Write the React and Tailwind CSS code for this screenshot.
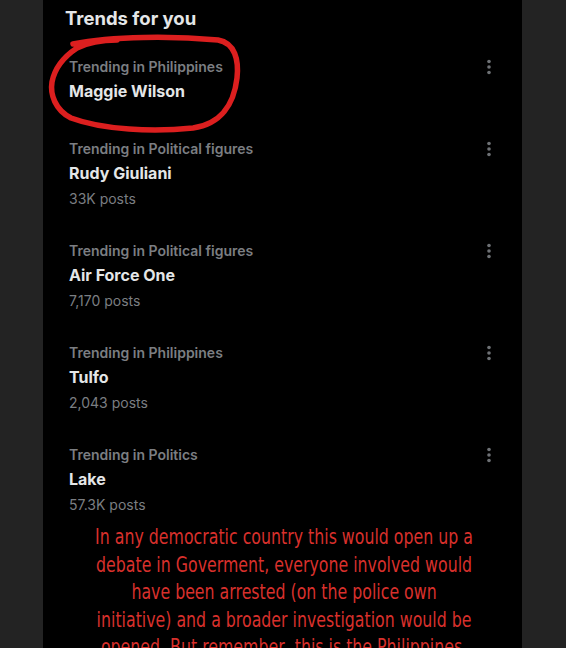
const trends = [
  { label: 'Trending in Philippines', name: 'Maggie Wilson', posts: null },
  { label: 'Trending in Political figures', name: 'Rudy Giuliani', posts: '33K posts' },
  { label: 'Trending in Political figures', name: 'Air Force One', posts: '7,170 posts' },
  { label: 'Trending in Philippines', name: 'Tulfo', posts: '2,043 posts' },
  { label: 'Trending in Politics', name: 'Lake', posts: '57.3K posts' },
];

const note = [
  'In any democratic country this would open up a',
  'debate in Goverment, everyone involved would',
  'have been arrested (on the police own',
  'initiative) and a broader investigation would be',
  'opened. But remember, this is the Philippines.',
];

function Dots() {
  return (
    <svg width="6" height="16" viewBox="0 0 6 16" className="text-[#6e7175]">
      <circle cx="3" cy="2.5" r="1.8" fill="currentColor" />
      <circle cx="3" cy="8" r="1.8" fill="currentColor" />
      <circle cx="3" cy="13.5" r="1.8" fill="currentColor" />
    </svg>
  );
}

function TrendRow({ item, first }) {
  return (
    <div className={`flex justify-between pl-[26px] pr-[30px] ${first ? 'pb-[32px]' : 'pb-[27px]'}`}>
      <div className="flex flex-col">
        <span className="h-[25px] leading-[25px] text-[14px] font-semibold text-[#7b7e82]">{item.label}</span>
        <span className="h-[25px] leading-[25px] text-[16px] font-bold text-[#e4e6e7]">{item.name}</span>
        {item.posts && (
          <span className="h-[25px] leading-[25px] text-[14px] text-[#7b7e82]">{item.posts}</span>
        )}
      </div>
      <div className="pt-[5px]">
        <Dots />
      </div>
    </div>
  );
}

export default function App() {
  return (
    <div className="flex h-[648px] w-[566px] overflow-hidden bg-[#222222]" style={{ fontFamily: 'Inter, "Noto Sans", sans-serif' }}>
      <div className="w-[43px] shrink-0 bg-[#232323]" />
      <div className="relative w-[479px] shrink-0 bg-black">
        <h2 className="pl-[22px] pt-[4px] pb-[22px] text-[18.5px] font-bold leading-[28px] text-[#e4e6e7]">Trends for you</h2>
        {trends.map((t, i) => (
          <TrendRow key={i} item={t} first={i === 0} />
        ))}
        <div
          className="-mt-[20px] flex scale-x-[0.77] flex-col items-center whitespace-nowrap pl-[4px] text-[20.5px] leading-[27.5px] text-[#d8302c]"
          style={{ fontFamily: '"DejaVu Sans", sans-serif' }}
        >
          {note.map((line, i) => (
            <span key={i}>{line}</span>
          ))}
        </div>
        <svg className="pointer-events-none absolute left-0 top-0" width="479" height="160" viewBox="0 0 479 160">
          <path
            d="M30 44 C70 36 130 36 175 40 C192 43 196 60 194 78 C191 104 178 124 150 128 C110 132 60 130 28 118 C12 110 7 94 9 82 C12 66 22 56 34 48 C46 42 60 40 74 40"
            fill="none"
            stroke="#dc1f1f"
            strokeWidth="5.5"
            strokeLinecap="round"
            strokeLinejoin="round"
          />
        </svg>
      </div>
      <div className="flex-1 bg-[#232323]" />
    </div>
  );
}
